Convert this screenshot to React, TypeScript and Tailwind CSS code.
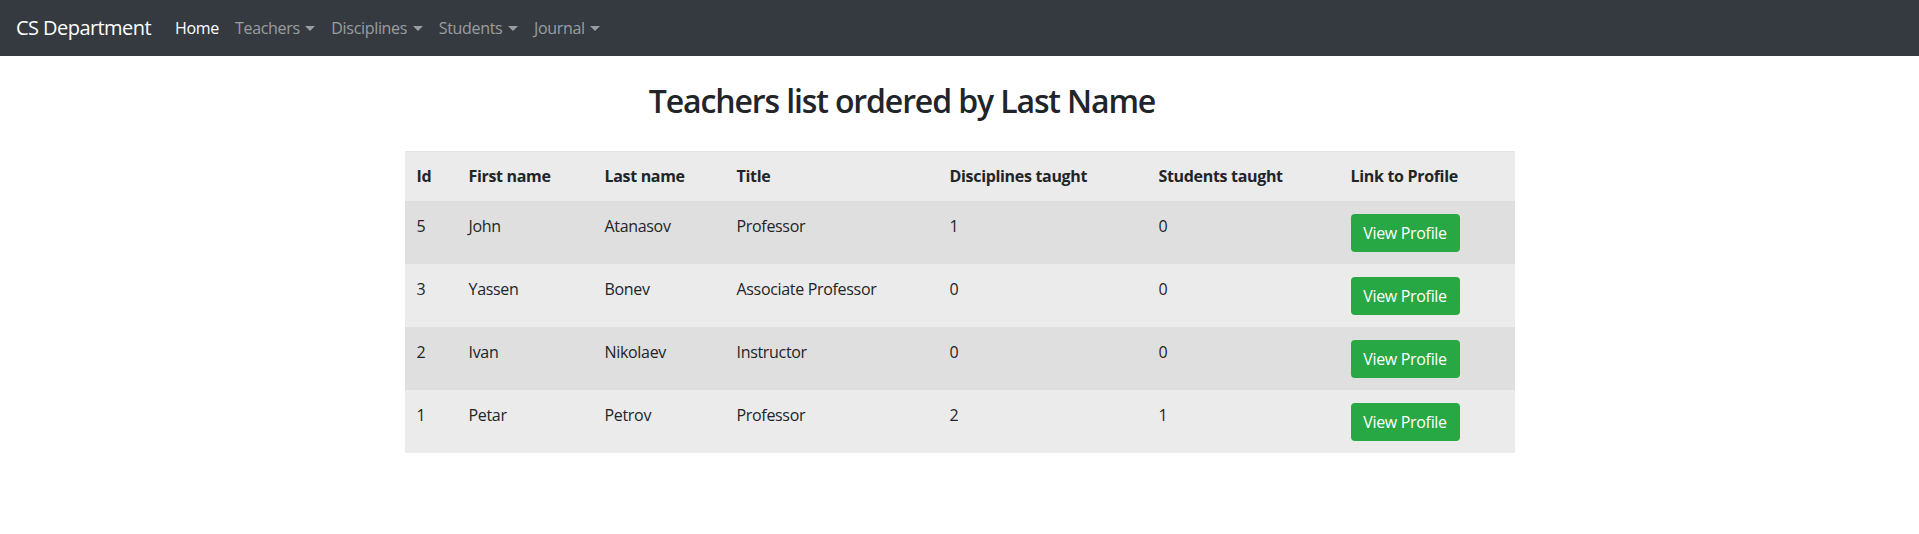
import React from 'react';

const teachers = [
  { id: 5, first: 'John', last: 'Atanasov', title: 'Professor', disciplines: 1, students: 0 },
  { id: 3, first: 'Yassen', last: 'Bonev', title: 'Associate Professor', disciplines: 0, students: 0 },
  { id: 2, first: 'Ivan', last: 'Nikolaev', title: 'Instructor', disciplines: 0, students: 0 },
  { id: 1, first: 'Petar', last: 'Petrov', title: 'Professor', disciplines: 2, students: 1 },
];

const navItems = ['Teachers', 'Disciplines', 'Students', 'Journal'];

const Caret = () => (
  <span className="inline-block w-0 h-0 ml-[0.35em] align-[0.2em] border-t-[0.32em] border-t-current border-x-[0.32em] border-x-transparent" />
);

const App = () => {
  return (
    <div className="min-h-screen bg-white font-['Open_Sans','Noto_Sans',sans-serif] tracking-[-0.02em] text-[#212529]">
      {/* Navbar */}
      <nav className="bg-[#343a40] h-14 px-4 flex items-center">
        <span className="text-white text-[20px] tracking-[-0.028em] mr-4">CS Department</span>
        <ul className="flex items-center text-base">
          <li className="px-2 text-white">Home</li>
          {navItems.map((item) => (
            <li key={item} className="px-2 text-white/50">
              {item}
              <Caret />
            </li>
          ))}
        </ul>
      </nav>

      <div className="w-[1110px] mx-auto">
        <h2 className="text-[32px] font-semibold leading-[1.2] tracking-[-0.035em] text-center mr-[115px] mt-[26px] mb-[31px]">
          Teachers list ordered by Last Name
        </h2>
        <table className="w-full table-fixed border-collapse bg-[#ebebeb] text-base text-left">
          <colgroup>
            <col className="w-[52px]" />
            <col className="w-[136px]" />
            <col className="w-[132px]" />
            <col className="w-[213px]" />
            <col className="w-[209px]" />
            <col className="w-[192px]" />
            <col className="w-[176px]" />
          </colgroup>
          <thead>
            <tr className="border-t border-[#e2e2e2]">
              <th className="px-3 pt-3 pb-[13px] font-bold leading-6">Id</th>
              <th className="px-3 pt-3 pb-[13px] font-bold leading-6">First name</th>
              <th className="px-3 pt-3 pb-[13px] font-bold leading-6">Last name</th>
              <th className="px-3 pt-3 pb-[13px] font-bold leading-6">Title</th>
              <th className="px-3 pt-3 pb-[13px] font-bold leading-6">Disciplines taught</th>
              <th className="px-3 pt-3 pb-[13px] font-bold leading-6">Students taught</th>
              <th className="px-3 pt-3 pb-[13px] font-bold leading-6">Link to Profile</th>
            </tr>
          </thead>
          <tbody>
            {teachers.map((t, i) => (
              <tr key={t.id} className={i % 2 === 0 ? 'bg-[#dfdfdf]' : 'bg-[#ebebeb]'}>
                <td className="px-3 pt-[13px] pb-3 align-top leading-6">{t.id}</td>
                <td className="px-3 pt-[13px] pb-3 align-top leading-6">{t.first}</td>
                <td className="px-3 pt-[13px] pb-3 align-top leading-6">{t.last}</td>
                <td className="px-3 pt-[13px] pb-3 align-top leading-6">{t.title}</td>
                <td className="px-3 pt-[13px] pb-3 align-top leading-6">{t.disciplines}</td>
                <td className="px-3 pt-[13px] pb-3 align-top leading-6">{t.students}</td>
                <td className="px-3 pt-[13px] pb-3 align-top leading-6">
                  <button className="h-[38px] w-[109px] rounded bg-[#28a745] text-white text-base leading-6">
                    View Profile
                  </button>
                </td>
              </tr>
            ))}
          </tbody>
        </table>
      </div>
    </div>
  );
};

export default App;
